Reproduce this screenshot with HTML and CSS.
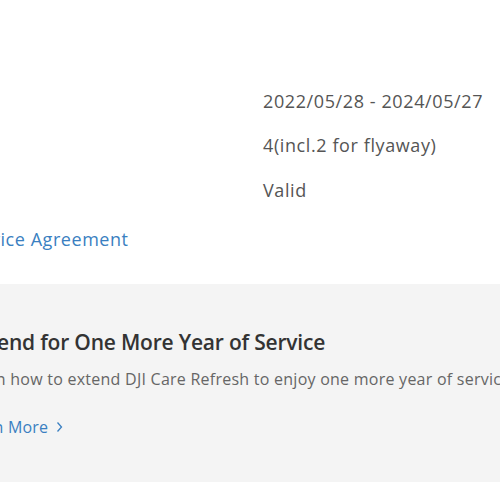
FILE: index.html
```html
<!DOCTYPE html>
<html>
<head>
<meta charset="utf-8">
<link rel="stylesheet" href="styles.css">
</head>
<body>
<div class="page">
  <section class="info">
    <div class="rows">
      <div class="row"><span class="label"></span><span class="value">2022/05/28 - 2024/05/27</span></div>
      <div class="row"><span class="label"></span><span class="value">4(incl.2 for flyaway)</span></div>
      <div class="row"><span class="label"></span><span class="value">Valid</span></div>
    </div>
    <a class="link agreement">Service Agreement</a>
  </section>
  <section class="extend">
    <h2 class="title">Extend for One More Year of Service</h2>
    <p class="desc">Learn how to extend DJI Care Refresh to enjoy one more year of service.</p>
    <a class="link more">Learn More <svg class="chev" width="7" height="12" viewBox="0 0 7 12"><path d="M1.5 1.5 L5.5 6 L1.5 10.5" fill="none" stroke="#3a7fc1" stroke-width="1.3"/></svg></a>
  </section>
</div>
</body>
</html>
```
FILE: styles.css
```css
html, body { margin: 0; padding: 0; background: #fff; overflow: hidden; }
body { width: 500px; height: 500px; font-family: "Open Sans", "Noto Sans", sans-serif; }
.page { width: 500px; }
.info { padding: 79px 0 33px 0; }
.rows { display: flex; flex-direction: column; margin-left: -38px; }
.row { display: grid; grid-template-columns: 301px 1fr; line-height: 44px; font-size: 18px; letter-spacing: 0.6px; color: #555; white-space: nowrap; }
.row:nth-child(2) { line-height: 45px; }
.link { color: #3a7fc1; text-decoration: none; white-space: nowrap; }
.agreement { display: block; margin: 15px 0 0 -38px; font-size: 18px; letter-spacing: 0.55px; line-height: 24px; }
.extend { background: #f4f4f4; padding: 43px 0 43px 0; }
.title { margin: 0 0 0 -34px; font-size: 21px; letter-spacing: -0.2px; line-height: 30px; font-weight: 600; color: #333; white-space: nowrap; }
.desc { margin: 10px 0 0 -38px; font-size: 16px; letter-spacing: 0.25px; line-height: 24px; color: #666; white-space: nowrap; }
.more { display: flex; align-items: center; gap: 8px; margin: 24px 0 0 -40px; font-size: 16px; letter-spacing: 0.2px; line-height: 24px; }
.chev { display: block; }
```
